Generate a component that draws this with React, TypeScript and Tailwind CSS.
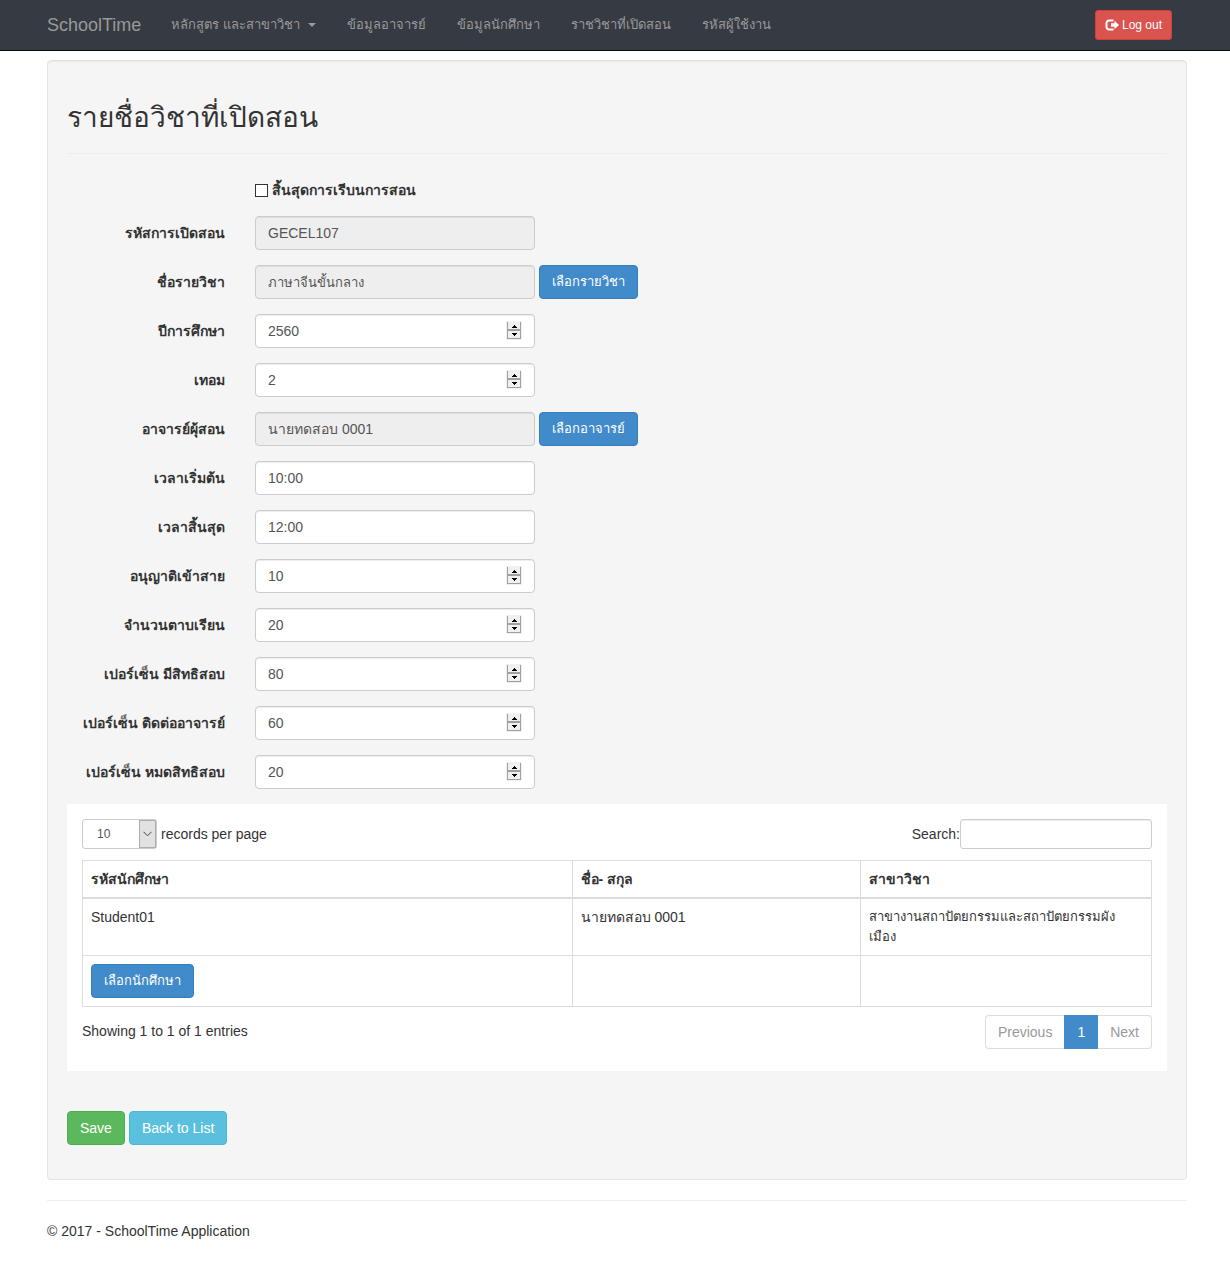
import type { ReactNode } from 'react';

const navLinks = ['ข้อมูลอาจารย์', 'ข้อมูลนักศึกษา', 'ราชวิชาที่เปิดสอน', 'รหัสผู้ใช้งาน'];

type FieldKind = 'text' | 'number' | 'readonly';
type FieldData = { id: string; label: string; value: string; kind: FieldKind; action?: string; thai?: boolean };

const fields: FieldData[] = [
  { id: 'code', label: 'รหัสการเปิดสอน', value: 'GECEL107', kind: 'readonly' },
  { id: 'subject', label: 'ชื่อรายวิชา', value: 'ภาษาจีนขั้นกลาง', kind: 'readonly', action: 'เลือกรายวิชา', thai: true },
  { id: 'year', label: 'ปีการศึกษา', value: '2560', kind: 'number' },
  { id: 'term', label: 'เทอม', value: '2', kind: 'number' },
  { id: 'teacher', label: 'อาจารย์ผุ้สอน', value: 'นายทดสอบ 0001', kind: 'readonly', action: 'เลือกอาจารย์' },
  { id: 'start', label: 'เวลาเริ่มต้น', value: '10:00', kind: 'text' },
  { id: 'end', label: 'เวลาสิ้นสุด', value: '12:00', kind: 'text' },
  { id: 'late', label: 'อนุญาติเข้าสาย', value: '10', kind: 'number' },
  { id: 'count', label: 'จำนวนตาบเรียน', value: '20', kind: 'number' },
  { id: 'eligible', label: 'เปอร์เซ็น มีสิทธิสอบ', value: '80', kind: 'number' },
  { id: 'contact', label: 'เปอร์เซ็น ติดต่ออาจารย์', value: '60', kind: 'number' },
  { id: 'barred', label: 'เปอร์เซ็น หมดสิทธิสอบ', value: '20', kind: 'number' },
];

function PrimaryButton({ children }: { children: ReactNode }) {
  return (
    <button type="button" className="h-[34px] shrink-0 rounded border border-[#357ebd] bg-[#428bca] px-3 text-[13px] leading-5 text-white">
      {children}
    </button>
  );
}

function Spinner({ label }: { label: string }) {
  return (
    <span className="absolute top-2 right-[14px] flex h-[17px] w-[14px] flex-col border-x border-[#a0a0a0] bg-[#f0f0f0] outline outline-[#f0f0f0]">
      <button type="button" aria-label={`${label} +`} className="flex h-2 items-end justify-center border-b border-[#a0a0a0] pb-px">
        <svg viewBox="0 0 5 3" className="h-[3px] w-[5px]" shapeRendering="crispEdges" aria-hidden="true">
          <path d="M2 0h1v1h1v1h1v1H0V2h1V1h1z" />
        </svg>
      </button>
      <button type="button" aria-label={`${label} −`} className="flex h-[9px] items-center justify-center border-y border-[#a0a0a0]">
        <svg viewBox="0 0 5 3" className="h-[3px] w-[5px]" shapeRendering="crispEdges" aria-hidden="true">
          <path d="M0 0h5v1H4v1H3v1H2V2H1V1H0z" />
        </svg>
      </button>
    </span>
  );
}

function Field({ id, label, value, kind, action, thai }: FieldData) {
  return (
    <div className="flex items-center gap-[30px]">
      <label htmlFor={id} className="w-[158px] shrink-0 text-right font-bold whitespace-nowrap">
        {label}
      </label>
      <div className="flex items-center gap-1">
        <div className="relative w-[280px]">
          <input
            id={id}
            type={kind === 'number' ? 'number' : 'text'}
            readOnly={kind === 'readonly'}
            defaultValue={value}
            className={`block h-[34px] w-full appearance-none rounded border border-[#ccc] px-3 text-[#555] shadow-[inset_0_1px_1px_rgba(0,0,0,0.075)] [&::-webkit-inner-spin-button]:appearance-none ${
              kind === 'readonly' ? 'bg-[#eee]' : 'bg-white'
            } ${thai ? 'text-[13px]' : 'text-sm'}`}
          />
          {kind === 'number' && <Spinner label={label} />}
        </div>
        {action && <PrimaryButton>{action}</PrimaryButton>}
      </div>
    </div>
  );
}

function Navbar() {
  return (
    <header className="border-b border-[#090909] bg-[#363a42] pr-[43px] pl-[47px] text-[#999]">
      <nav className="mx-auto flex h-[50px] max-w-[1140px] items-center">
        <a href="#home" className="mr-[30px] text-lg leading-5">SchoolTime</a>
        <div className="flex gap-[31px] text-[13px] leading-5 whitespace-nowrap">
          <a href="#courses" className="flex items-center gap-2">
            หลักสูตร และสาขาวิชา
            <svg viewBox="0 0 8 4" className="h-1 w-2 fill-current" aria-hidden="true">
              <path d="M0 0h8L4 4z" />
            </svg>
          </a>
          {navLinks.map((link) => (
            <a key={link} href="#section">{link}</a>
          ))}
        </div>
        <button type="button" className="mr-[15px] ml-auto flex h-[30px] items-center gap-[3px] rounded-[3px] border border-[#d43f3a] bg-[#d9534f] px-[9px] text-xs text-white">
          <svg viewBox="0 0 14 12" className="h-3 w-[14px]" aria-hidden="true">
            <path d="M8.5 1.500H4A2.500 2.500 0 0 0 1.500 4v4A2.500 2.500 0 0 0 4 10.500h4.500" fill="none" stroke="white" strokeWidth="2" />
            <path d="M6 4.300h3.500V1.700L14 6l-4.500 4.300V7.700H6z" fill="white" />
          </svg>
          Log out
        </button>
      </nav>
    </header>
  );
}

function StudentTable() {
  return (
    <table className="mt-[11px] w-full table-fixed border-collapse [&_td]:border [&_td]:border-[#ddd] [&_td]:p-2 [&_td]:align-top [&_th]:border [&_th]:border-b-2 [&_th]:border-[#ddd] [&_th]:p-2 [&_th]:text-left">
      <colgroup>
        <col className="w-[45.8%]" />
        <col className="w-[27%]" />
        <col />
      </colgroup>
      <thead>
        <tr>
          <th>รหัสนักศึกษา</th>
          <th>ชื่อ- สกุล</th>
          <th>สาขาวิชา</th>
        </tr>
      </thead>
      <tbody>
        <tr>
          <td>Student01</td>
          <td>นายทดสอบ 0001</td>
          <td className="pr-6! text-[13px] leading-5">
            สาขางานสถาปัตยกรรมและสถาปัตยกรรมผัง
            <wbr />
            เมือง
          </td>
        </tr>
        <tr>
          <td><PrimaryButton>เลือกนักศึกษา</PrimaryButton></td>
          <td />
          <td />
        </tr>
      </tbody>
    </table>
  );
}

function StudentPanel() {
  return (
    <section className="mt-[15px] bg-white px-[15px] pt-[15px] pb-[22px]">
      <div className="flex items-center justify-between">
        <label className="flex items-center gap-1">
          <span className="relative">
            <select defaultValue="10" className="block h-[30px] w-[75px] appearance-none rounded-[3px] border border-[#ccc] bg-white pl-[14px] text-xs text-[#555]">
              <option>10</option>
              <option>25</option>
              <option>50</option>
              <option>100</option>
            </select>
            <span className="pointer-events-none absolute top-px right-px flex h-7 w-[17px] items-center justify-center border border-[#adadad] bg-[#e1e1e1]">
              <svg viewBox="0 0 9 6" className="h-[6px] w-[9px]" fill="none" stroke="#444" aria-hidden="true">
                <path d="M.5.8l4 4 4-4" />
              </svg>
            </span>
          </span>
          records per page
        </label>
        <label className="flex items-center">
          Search:
          <input type="search" className="h-[30px] w-48 rounded-[3px] border border-[#ccc] bg-white px-[10px] text-xs text-[#555] shadow-[inset_0_1px_1px_rgba(0,0,0,0.075)]" />
        </label>
      </div>
      <StudentTable />
      <div className="mt-2 flex items-start justify-between">
        <p className="mt-[6px]">Showing 1 to 1 of 1 entries</p>
        <div className="flex h-[34px] text-[#999]">
          <button type="button" className="rounded-l border border-r-0 border-[#ddd] px-3">Previous</button>
          <button type="button" className="border border-[#428bca] bg-[#428bca] px-3 text-white">1</button>
          <button type="button" className="rounded-r border border-l-0 border-[#ddd] px-3">Next</button>
        </div>
      </div>
    </section>
  );
}

export default function App() {
  return (
    <div className="font-['Liberation_Sans',Arial,sans-serif] text-sm leading-5 text-[#333]">
      <Navbar />
      <div className="pr-[43px] pl-[47px]">
        <div className="mx-auto max-w-[1140px]">
          <main className="mt-[9px] rounded border border-[#e3e3e3] bg-[#f5f5f5] p-[19px] pb-[34px] shadow-[inset_0_1px_1px_rgba(0,0,0,0.05)]">
            <h1 className="mt-[22px] text-[28px] leading-8 font-medium">รายชื่อวิชาที่เปิดสอน</h1>
            <hr className="mt-[19px] border-[#eee]" />
            <form>
              <label className="mt-[26px] ml-[188px] flex items-center gap-1 font-bold">
                <input type="checkbox" className="h-[13px] w-[13px] appearance-none border border-[#333] bg-white checked:bg-[#333]" />
                สิ้นสุดการเรีบนการสอน
              </label>
              <div className="mt-4 flex flex-col gap-[15px]">
                {fields.map((field) => (
                  <Field key={field.id} {...field} />
                ))}
              </div>
              <StudentPanel />
              <div className="mt-10 flex gap-1">
                <button type="submit" className="h-[34px] rounded border border-[#4cae4c] bg-[#5cb85c] px-3 text-white">Save</button>
                <a href="#list" className="flex h-[34px] items-center rounded border border-[#46b8da] bg-[#5bc0de] px-3 text-white">Back to List</a>
              </div>
            </form>
          </main>
          <hr className="mt-5 border-[#eee]" />
          <footer className="mt-5 pb-5">
            <p>© 2017 - SchoolTime Application</p>
          </footer>
        </div>
      </div>
    </div>
  );
}
